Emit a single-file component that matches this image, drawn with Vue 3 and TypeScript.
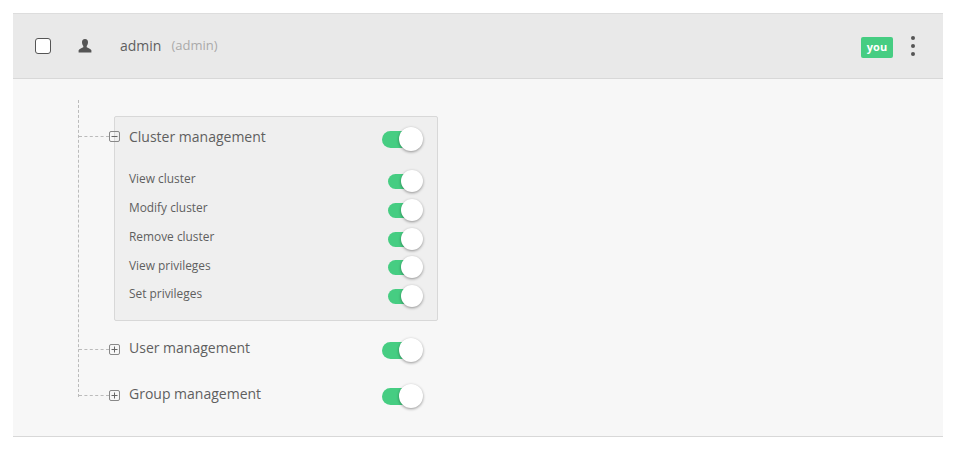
<script setup lang="ts">
interface Group {
  name: string
  open: boolean
  items: string[]
}

const groups: Group[] = [
  {
    name: 'Cluster management',
    open: true,
    items: ['View cluster', 'Modify cluster', 'Remove cluster', 'View privileges', 'Set privileges'],
  },
  { name: 'User management', open: false, items: [] },
  { name: 'Group management', open: false, items: [] },
]
</script>

<template>
  <div class="page">
    <div class="user">
      <header class="user-head">
        <span class="check"></span>
        <svg class="user-icon" width="14" height="14" viewBox="0 0 14 14">
          <path
            fill="#555"
            d="M7 0C4.9 0 3.9 1.5 4 3.5c.1 1.5.6 2.7 1.3 3.5v1.2C4.1 9 1.4 9.7.6 11.2V13.5h12.8v-2.3c-.8-1.5-3.5-2.2-4.7-3V7c.7-.8 1.2-2 1.3-3.5C10.1 1.5 9.1 0 7 0z"
          />
        </svg>
        <span class="user-name">admin</span>
        <span class="user-login">(admin)</span>
        <span class="you">you</span>
        <span class="menu"><i></i><i></i><i></i></span>
      </header>

      <div class="user-body">
        <div class="tree">
          <div v-for="g in groups" :key="g.name" :class="['node', g.open && 'open']">
            <div class="node-head">
              <span class="expander">
                <svg width="9" height="9" viewBox="0 0 9 9">
                  <path v-if="g.open" stroke="#666" fill="none" d="M1.5 4.5h6" />
                  <path v-else stroke="#666" fill="none" d="M1.5 4.5h6M4.5 1.5v6" />
                </svg>
              </span>
              <span class="node-name">{{ g.name }}</span>
              <span class="toggle"><span class="knob"></span></span>
            </div>
            <div v-if="g.open" class="node-items">
              <div v-for="item in g.items" :key="item" class="item">
                <span class="item-name">{{ item }}</span>
                <span class="toggle small"><span class="knob"></span></span>
              </div>
            </div>
          </div>
        </div>
      </div>
    </div>
  </div>
</template>

<style>
html,
body {
  background: #fff;
}
</style>

<style scoped>
.page {
  padding: 13px 15px 12px 13px;
  font-family: 'Open Sans', 'Noto Sans', sans-serif;
  color: #5f5f5f;
}

.user {
  border-top: 1px solid #ddd;
  border-bottom: 1px solid #d8d8d8;
  background: #f7f7f7;
}

.user-head {
  display: flex;
  align-items: center;
  height: 64px;
  padding: 0 28px 0 22px;
  background: #e9e9e9;
  border-bottom: 1px solid #d8d8d8;
}

.check {
  box-sizing: border-box;
  width: 16px;
  height: 16px;
  background: #fff;
  border: 1px solid #555;
  border-radius: 3px;
}

.user-icon {
  margin-left: 27px;
}

.user-name {
  margin-left: 28px;
  padding-bottom: 2px;
  font-size: 14px;
}

.user-login {
  margin-left: 10px;
  padding-bottom: 2px;
  font-size: 13px;
  color: #aaa;
}

.you {
  margin-left: auto;
  margin-top: 2px;
  width: 32px;
  height: 21px;
  line-height: 20px;
  text-align: center;
  background: #46cd82;
  border-radius: 2px;
  color: #fff;
  font-size: 11px;
  font-weight: 700;
}

.menu {
  display: flex;
  flex-direction: column;
  gap: 4px;
  margin-left: 18px;
}

.menu i {
  width: 4px;
  height: 4px;
  border-radius: 50%;
  background: #555;
}

.user-body {
  padding: 21px 0 22px 65px;
}

.tree {
  position: relative;
  display: flex;
  flex-direction: column;
  gap: 6px;
  padding-top: 16px;
}

.tree::before {
  content: '';
  position: absolute;
  left: 0;
  top: 0;
  bottom: 17px;
  border-left: 1px dashed #bbb;
}

.node {
  position: relative;
  box-sizing: border-box;
  width: 324px;
  margin-left: 36px;
  border: 1px solid transparent;
  border-radius: 2px;
}

.node.open {
  background: #efefef;
  border-color: #d8d8d8;
  padding-bottom: 12.1px;
  margin-bottom: 1px;
}

.node-head {
  display: flex;
  align-items: center;
  height: 38px;
  padding-left: 14px;
}

.expander {
  position: absolute;
  left: -6px;
  top: 15px;
  box-sizing: border-box;
  width: 11px;
  height: 11px;
  border: 1px solid #888;
  border-radius: 2px;
}

.node.open .expander {
  top: 14px;
}

.expander svg {
  display: block;
}

.expander::before {
  content: '';
  position: absolute;
  right: 10px;
  top: 4px;
  width: 30px;
  border-top: 1px dashed #bbb;
}

.node-name {
  font-size: 14px;
}

.toggle {
  position: relative;
  display: block;
  margin-left: auto;
  margin-top: 6px;
  margin-right: 26px;
  width: 29px;
  height: 17px;
  background: #46cd82;
  border-radius: 9px;
}

.knob {
  position: absolute;
  top: -4px;
  right: -12px;
  width: 24px;
  height: 24px;
  background: #fff;
  border-radius: 50%;
  box-shadow: 0 1px 3px rgba(0, 0, 0, 0.4);
}

.node-items {
  display: flex;
  flex-direction: column;
  padding-top: 8.9px;
}

.item {
  display: flex;
  align-items: center;
  height: 28.8px;
  padding-left: 14px;
}

.item-name {
  font-size: 11.9px;
}

.toggle.small {
  margin-top: 6.4px;
  margin-right: 25px;
  width: 24px;
  height: 15px;
}

.toggle.small .knob {
  top: -4px;
  right: -11px;
  width: 22px;
  height: 22px;
}
</style>
